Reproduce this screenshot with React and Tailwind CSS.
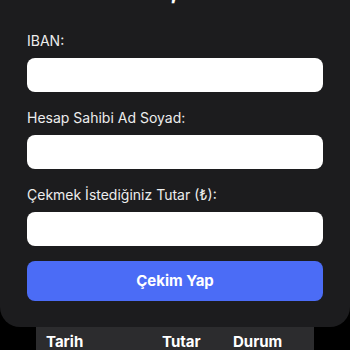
import React from "react";

const fields = [
  { id: "iban", label: "IBAN:" },
  { id: "name", label: "Hesap Sahibi Ad Soyad:" },
  { id: "amount", label: "Çekmek İstediğiniz Tutar (₺):" },
];

const App = () => {
  return (
    <div
      className="min-h-screen w-full bg-black overflow-hidden"
      style={{ fontFamily: "Inter, 'Noto Sans', sans-serif" }}
    >
      {/* Withdraw card */}
      <div className="bg-[#1c1c1e] rounded-b-[20px] px-[27px] pb-[26px]">
        <div className="-mt-[30px] text-center text-[28px] leading-[36px] font-semibold text-white">
          ₺0,00
        </div>

        <div className="mt-[25px] flex flex-col gap-[16px]">
          {fields.map((f) => (
            <div key={f.id} className="flex flex-col gap-[7px]">
              <label
                htmlFor={f.id}
                className="text-[14px] leading-[20px] text-[#ededed]"
              >
                {f.label}
              </label>
              <input
                id={f.id}
                type="text"
                className="h-[34px] w-full rounded-[8px] bg-white px-3 text-[15px] text-black outline-none"
              />
            </div>
          ))}
        </div>

        <button
          type="button"
          className="mt-[15px] h-[40px] w-full rounded-[8px] bg-[#4b6cf6] text-[15px] font-bold text-white"
        >
          Çekim Yap
        </button>
      </div>

      {/* History table */}
      <div className="mx-[36px] bg-[#2c2c2e]">
        <div className="grid grid-cols-[116px_71px_1fr] px-[10px] pt-[5px] pb-2 text-[15px] leading-[20px] font-bold text-white">
          <span>Tarih</span>
          <span>Tutar</span>
          <span>Durum</span>
        </div>
      </div>
    </div>
  );
};

export default App;
